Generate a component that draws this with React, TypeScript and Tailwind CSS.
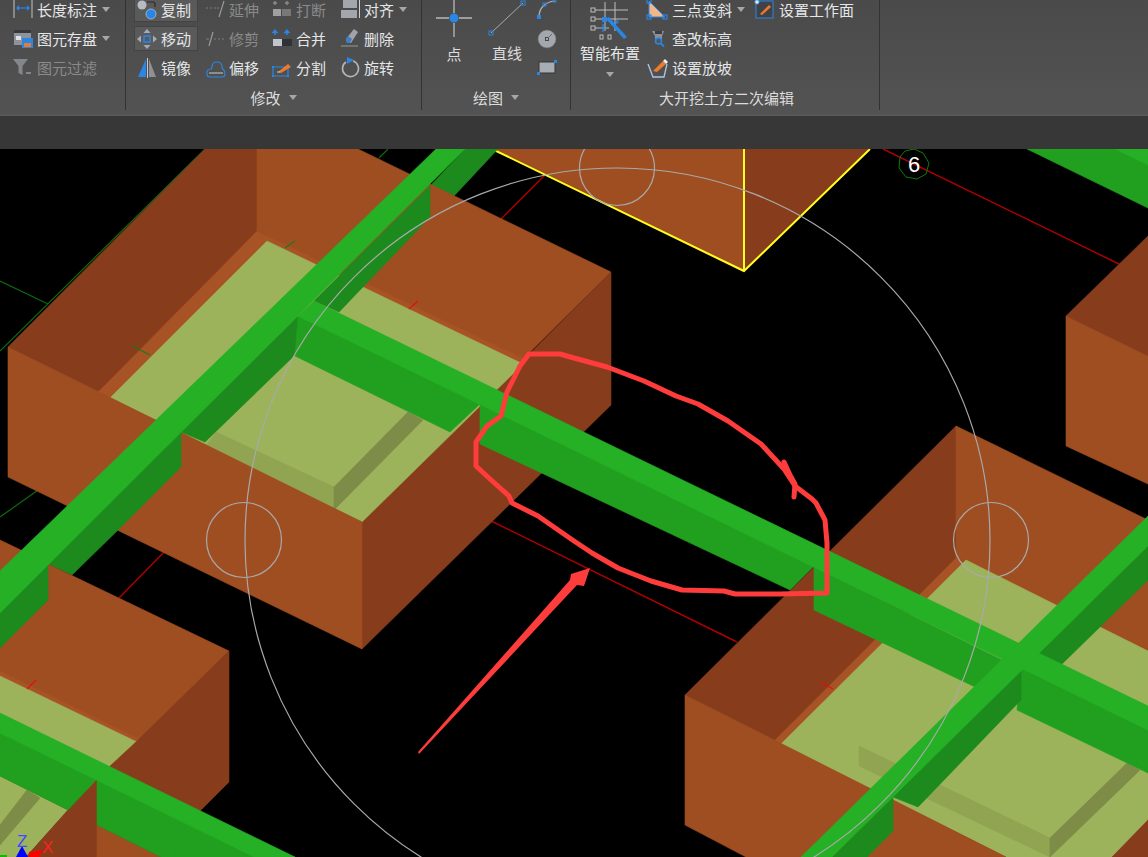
import React from "react";

const BLUE = "#2a86e4";
const DIM = "#7d7d7d";
const ORANGE = "#ee7b2b";

const Caret: React.FC<{ className?: string }> = ({ className }) => (
  <svg width="8" height="5" viewBox="0 0 8 5" className={className}>
    <path d="M0 0h8L4 5z" fill="#a6a6a6" />
  </svg>
);

const Ico: React.FC<{ children: React.ReactNode; w?: number; h?: number }> = ({ children, w = 20, h = 20 }) => (
  <svg width={w} height={h} viewBox={`0 0 ${w} ${h}`} className="shrink-0 overflow-visible">
    {children}
  </svg>
);

// panel 1
const LengthDim = () => (
  <Ico>
    <path d="M1 0v18M19 0v18" stroke="#c4c4c4" strokeWidth="1" />
    <path d="M4 8h12" stroke={BLUE} strokeWidth="1.2" />
    <path d="M3 8l3-3v6zM17 8l-3-3v6z" fill={BLUE} />
  </Ico>
);
const SaveElem = () => (
  <Ico>
    <rect x="1" y="1" width="17" height="15" fill="#8e9299" />
    <rect x="1" y="1" width="17" height="3" fill="#35383d" />
    <rect x="3" y="7" width="5" height="4" fill="#dfe1e4" />
    <rect x="9" y="9" width="11" height="10" fill={BLUE} />
    <rect x="11" y="14" width="7" height="4" fill={ORANGE} />
  </Ico>
);
const Funnel = () => (
  <Ico>
    <path d="M0 1h15L9.5 8v9l-4-2V8z" fill="#83878c" />
    <rect x="13" y="14" width="5" height="2" fill="#83878c" />
  </Ico>
);

// modify panel
const CopyIcon = () => (
  <Ico>
    <circle cx="5" cy="5" r="4.5" fill="#b8bcc2" />
    <circle cx="14" cy="14" r="5" fill={BLUE} />
    <circle cx="14" cy="14" r="5" fill="none" stroke="#c9d7e6" strokeWidth="0.6" />
    <path d="M10 2h6a2 2 0 0 1 2 2v3" fill="none" stroke="#2a2a2a" strokeWidth="1.2" />
  </Ico>
);
const MoveIcon = () => (
  <Ico>
    <path d="M10 0l3.5 4h-7zM10 20l3.5-4h-7zM0 10l4-3.5v7zM20 10l-4-3.5v7z" fill="#a8acb2" />
    <rect x="7" y="7" width="6" height="6" fill="none" stroke={BLUE} strokeWidth="1.5" />
  </Ico>
);
const MirrorIcon = () => (
  <Ico>
    <path d="M9 1v18H1z" fill={BLUE} />
    <path d="M12 1v18h7z" fill="#8d9096" />
    <path d="M10.5 0v20" stroke="#c8c8c8" strokeWidth="1" />
  </Ico>
);
const ExtendIcon = () => (
  <Ico>
    <path d="M1 8h2M5 8h2M9 8h2M12 8h2" stroke={DIM} strokeWidth="1.2" />
    <path d="M19 1L14 17" stroke="#9a9a9a" strokeWidth="1.2" />
  </Ico>
);
const TrimIcon = () => (
  <Ico>
    <path d="M1 10h3M9 10h2M13 10h2M17 10h2" stroke={DIM} strokeWidth="1.2" />
    <path d="M8 3L4 17" stroke="#9a9a9a" strokeWidth="1.2" />
  </Ico>
);
const OffsetIcon = () => (
  <Ico>
    <path
      d="M2 16c-1-3 1-5 4-5 1 0 1-1 1-2 0-3 2-5 5-5s5 2 5 5c0 1 0 2 1 2"
      fill="none"
      stroke={BLUE}
      strokeWidth="1.2"
    />
    <path d="M2 16c0 2 1 3 3 3h12c2 0 3-1 3-3s-1-4-2-5" fill="none" stroke={BLUE} strokeWidth="1.2" />
    <path d="M4 15h14" stroke="#c9c9c9" strokeWidth="1" />
  </Ico>
);
const BreakIcon = () => (
  <Ico>
    <path d="M3 1v4M1 3h4M15 1v4M13 3h4" stroke="#8b8b8b" strokeWidth="1.4" />
    <rect x="1" y="9" width="8" height="7" fill="#a0a0a0" />
    <rect x="10" y="9" width="9" height="7" fill="#787878" />
  </Ico>
);
const MergeIcon = () => (
  <Ico>
    <path d="M3 2v4M1 3.5L3 1l2 2.5zM15 2v4M13 3.5L15 1l2 2.5z" stroke={BLUE} strokeWidth="1.4" fill={BLUE} />
    <rect x="1" y="10" width="9" height="7" fill="#c2c6cc" />
    <rect x="10" y="10" width="10" height="7" fill="#2f3237" />
  </Ico>
);
const SplitIcon = () => (
  <Ico>
    <path d="M1 9h15v9H1z" fill="none" stroke={BLUE} strokeWidth="1.2" />
    <path d="M6 14L16 6l3 3-10 6z" fill={ORANGE} />
    <path d="M5 14h3" stroke="#c8c8c8" strokeWidth="1" />
    <rect x="0" y="8" width="2" height="2" fill={BLUE} />
    <rect x="0" y="17" width="2" height="2" fill={BLUE} />
    <rect x="15" y="17" width="2" height="2" fill={BLUE} />
  </Ico>
);
const AlignIcon = () => (
  <Ico>
    <rect x="3" y="0" width="14" height="8" fill="#a3a7ad" />
    <rect x="1" y="10" width="16" height="8" fill="#a3a7ad" />
    <path d="M19.5 0v18" stroke="#d0d0d0" strokeWidth="1" />
  </Ico>
);
const DeleteIcon = () => (
  <Ico>
    <path d="M14 0l4 3-7 11H7l-1-4z" fill="#9ea3aa" />
    <path d="M7 14l-1-4 2-3 4 3-2 4z" fill="#3d7fc4" />
    <path d="M1 17h17" stroke="#9a9a9a" strokeWidth="1" />
  </Ico>
);
const RotateIcon = () => (
  <Ico>
    <path d="M6 4a8 8 0 1 0 7-1" fill="none" stroke="#b4b4b4" strokeWidth="1.6" />
    <path d="M7 -1l7 3-7 4z" fill={BLUE} />
  </Ico>
);

// excavation panel
const SlopeIcon = () => (
  <Ico>
    <path d="M1 1L17 17H1z" fill="#f2b68b" stroke={BLUE} strokeWidth="1" />
    <rect x="-1" y="-1" width="4" height="4" fill="none" stroke={BLUE} strokeWidth="1.2" />
    <rect x="-1" y="15" width="4" height="4" fill="none" stroke={BLUE} strokeWidth="1.2" />
    <rect x="15" y="15" width="4" height="4" fill="none" stroke={BLUE} strokeWidth="1.2" />
  </Ico>
);
const ElevIcon = () => (
  <Ico>
    <path d="M4 2h12l-2 5v5H7V7z" fill="#8d9197" />
    <rect x="7" y="2" width="7" height="3" fill="#3a3d42" />
    <circle cx="10.5" cy="12" r="3" fill="#555" stroke={BLUE} strokeWidth="1.6" />
    <path d="M13 14.5l3 3" stroke={BLUE} strokeWidth="1.8" />
  </Ico>
);
const GradeIcon = () => (
  <Ico>
    <path d="M0 6l5 13h11l3-13" fill="none" stroke="#a9c8e8" strokeWidth="1.3" />
    <path d="M5 13L15 3l3 3-9 8z" fill={ORANGE} />
    <path d="M15 3l2-2 3 3-2 2z" fill="#f0f0f0" />
  </Ico>
);
const WorkPlaneIcon = () => (
  <Ico>
    <rect x="1" y="1" width="17" height="17" fill="#3f4247" stroke={BLUE} strokeWidth="1" />
    <path d="M5 14l9-9 2 2-9 8z" fill={ORANGE} />
    <circle cx="2" cy="2" r="2.2" fill="#dbe7f3" stroke={BLUE} strokeWidth="0.8" />
  </Ico>
);

// draw panel
const PointIcon = () => (
  <Ico w={36} h={37}>
    <path d="M0 18h13M23 18h13M18 0v13M18 23v14" stroke="#b9b9b9" strokeWidth="1.3" />
    <circle cx="18" cy="18" r="4.5" fill={BLUE} />
  </Ico>
);
const LineIcon = () => (
  <Ico w={38} h={37}>
    <path d="M3 33L35 3" stroke="#a9a9a9" strokeWidth="1" />
    <rect x="1" y="31" width="4" height="4" fill="none" stroke={BLUE} strokeWidth="1" />
    <rect x="33" y="1" width="4" height="4" fill="none" stroke={BLUE} strokeWidth="1" />
  </Ico>
);
const ArcIcon = () => (
  <Ico>
    <path d="M2 17C2 8 8 2 18 1" fill="none" stroke="#b5b5b5" strokeWidth="1.2" />
    <rect x="0" y="15" width="4" height="4" fill={BLUE} />
    <rect x="6" y="3" width="3" height="3" fill="none" stroke={BLUE} strokeWidth="1" />
    <rect x="16" y="-1" width="3" height="3" fill="none" stroke={BLUE} strokeWidth="1" />
  </Ico>
);
const CircleIcon = () => (
  <Ico>
    <circle cx="10" cy="10" r="9" fill="#a4a8ae" stroke="#6d6f72" strokeWidth="0.6" />
    <rect x="8.5" y="8.5" width="3" height="3" fill="none" stroke="#46494d" strokeWidth="1" />
    <path d="M11 9l4-4" stroke="#6a6c70" strokeWidth="1" />
  </Ico>
);
const RectIcon = () => (
  <Ico>
    <rect x="2" y="4" width="16" height="11" fill="#a8acb3" stroke="#34373b" strokeWidth="1" />
    <rect x="0" y="14" width="3" height="3" fill={BLUE} />
    <rect x="17" y="2" width="3" height="3" fill={BLUE} />
  </Ico>
);
const SmartIcon = () => (
  <Ico w={38} h={38}>
    <path d="M14 0v29M24 0v29M4 8h33M4 17h33M4 26h14" stroke="#bdbdbd" strokeWidth="1" fill="none" />
    <rect x="0" y="6" width="4" height="4" fill="none" stroke="#bdbdbd" strokeWidth="1" />
    <rect x="0" y="15" width="4" height="4" fill="none" stroke="#bdbdbd" strokeWidth="1" />
    <rect x="0" y="24" width="4" height="4" fill="none" stroke="#bdbdbd" strokeWidth="1" />
    <rect x="9" y="33" width="3" height="4" fill="none" stroke="#bdbdbd" strokeWidth="1" />
    <rect x="17" y="33" width="3" height="4" fill="none" stroke="#bdbdbd" strokeWidth="1" />
    <path d="M15 17l3-2 18 20-3 2z" fill={BLUE} />
    <rect x="11" y="15" width="5" height="5" fill={BLUE} />
    <path d="M8 26h8M12 22v8M24 20h4M26 18v4" stroke={BLUE} strokeWidth="1.2" />
  </Ico>
);

type Item = { label: string; icon?: React.ReactNode; dim?: boolean; caret?: boolean; on?: boolean };

const Cell: React.FC<{ item: Item }> = ({ item }) => (
  <div className="flex h-[29px] items-center">
    <div
      className={`flex h-[25px] items-center gap-[4px] border pl-[2px] pr-[6px] ${
        item.on ? "border-[#444444] bg-[#5a5a5a]" : "border-transparent"
      }`}
    >
      {item.icon}
      <span className={`whitespace-nowrap text-[15px] leading-none ${item.dim ? "text-[#8a8a8a]" : "text-[#e4e6e8]"}`}>
        {item.label}
      </span>
      {item.caret ? <Caret className="ml-[1px]" /> : null}
    </div>
  </div>
);

const PanelTitle: React.FC<{ label: string; caret?: boolean }> = ({ label, caret }) => (
  <div className="flex h-[26px] items-center justify-center gap-[8px] text-[15px] leading-none text-[#dcdcdc]">
    <span>{label}</span>
    {caret ? <Caret /> : null}
  </div>
);

const modifyItems: Item[] = [
  { label: "复制", icon: <CopyIcon />, on: true },
  { label: "延伸", icon: <ExtendIcon />, dim: true },
  { label: "打断", icon: <BreakIcon />, dim: true },
  { label: "对齐", icon: <AlignIcon />, caret: true },
  { label: "移动", icon: <MoveIcon />, on: true },
  { label: "修剪", icon: <TrimIcon />, dim: true },
  { label: "合并", icon: <MergeIcon /> },
  { label: "删除", icon: <DeleteIcon /> },
  { label: "镜像", icon: <MirrorIcon /> },
  { label: "偏移", icon: <OffsetIcon /> },
  { label: "分割", icon: <SplitIcon /> },
  { label: "旋转", icon: <RotateIcon /> },
];

const Ribbon = () => (
  <div className="h-[115px] overflow-hidden bg-gradient-to-b from-[#4a4a4a] to-[#535353]">
    <div className="flex h-[110px]">
      <div className="w-[126px] shrink-0 border-r border-[#333333] pl-[10px]">
        <div className="-mt-[5px]">
          <Cell item={{ label: "长度标注", icon: <LengthDim />, caret: true }} />
          <Cell item={{ label: "图元存盘", icon: <SaveElem />, caret: true }} />
          <Cell item={{ label: "图元过滤", icon: <Funnel />, dim: true }} />
        </div>
      </div>

      <div className="flex w-[296px] shrink-0 flex-col border-r border-[#333333]">
        <div className="-mt-[5px] ml-[8px] grid h-[90px] grid-cols-[68px_67px_68px_68px] content-start">
          {modifyItems.map((item) => (
            <Cell key={item.label} item={item} />
          ))}
        </div>
        <PanelTitle label="修改" caret />
      </div>

      <div className="flex w-[149px] shrink-0 flex-col border-r border-[#333333]">
        <div className="flex h-[85px] pl-[14px]">
          <div className="flex w-[50px] flex-col items-start">
            <PointIcon />
            <span className="mt-[9px] w-[36px] text-center text-[15px] leading-none text-[#dcdcdc]">点</span>
          </div>
          <div className="flex w-[42px] flex-col items-center">
            <LineIcon />
            <span className="mt-[8px] whitespace-nowrap text-[15px] leading-none text-[#dcdcdc]">直线</span>
          </div>
          <div className="ml-[9px] flex flex-col gap-[9px]">
            <ArcIcon />
            <CircleIcon />
            <RectIcon />
          </div>
        </div>
        <PanelTitle label="绘图" caret />
      </div>

      <div className="flex w-[309px] shrink-0 flex-col border-r border-[#333333]">
        <div className="-mt-[5px] flex h-[90px]">
          <div className="ml-[8px] flex w-[62px] flex-col items-center pt-[7px]">
            <SmartIcon />
            <span className="mt-[5px] whitespace-nowrap text-[15px] leading-none text-[#e4e6e8]">智能布置</span>
            <Caret className="mt-[12px]" />
          </div>
          <div className="ml-[4px] w-[107px]">
            <Cell item={{ label: "三点变斜", icon: <SlopeIcon />, caret: true }} />
            <Cell item={{ label: "查改标高", icon: <ElevIcon /> }} />
            <Cell item={{ label: "设置放坡", icon: <GradeIcon /> }} />
          </div>
          <div>
            <Cell item={{ label: "设置工作面", icon: <WorkPlaneIcon /> }} />
          </div>
        </div>
        <div className="flex h-[26px] items-center justify-center pl-[3px] text-[15px] leading-none text-[#dcdcdc]">
          大开挖土方二次编辑
        </div>
      </div>
    </div>
  </div>
);

const DK = "#873d1c";
const MID = "#9f4e22";
const LEDGE = "#a85326";
const PALE = "#9db35b";
const PAD_M = "#91a452";
const PAD_D = "#7d8c47";
const G_L = "#25b025";
const G_M = "#21a020";
const G_D = "#1c8a1c";
const ANNOT = "#fe3c3c";

// the thin stroke closes the hairline seams between neighbouring faces
const Poly: React.FC<{ c: string; p: string }> = ({ c, p }) => (
  <polygon fill={c} stroke={c} strokeWidth="0.6" strokeLinejoin="round" points={p} />
);

const Scene = () => (
  <svg className="block h-[708px] w-[1148px]" viewBox="0 149 1148 708" style={{ background: "#000" }}>
    {/* grid lines under the solids */}
    <g fill="none">
      <path d="M0 351L205 149M0 281L48 304M48 483L0 517M388 149L379 158" stroke="#0d6a0d" strokeWidth="1.2" />
      <path d="M883 149L1119 264M501 219L551 169M168 548L119 598M487 519L737 642" stroke="#b00000" strokeWidth="1.4" />
    </g>

    {/* top right beam */}
    <Poly c={G_M} p="1027,149 1148,149 1148,208" />
    <Poly c={G_L} p="1115,149 1148,149 1148,165" />

    {/* right pit */}
    <Poly c={DK} p="1148,236 1066,316 1148,356" />
    <Poly c={MID} p="1066,316 1148,356 1148,484 1066,446" />

    {/* yellow pit */}
    <Poly c={MID} p="492,149 744,149 744,272" />
    <Poly c={DK} p="744,149 870,149 744,272" />
    <path d="M492 149L744 271L870 149M744 149V271" fill="none" stroke="#ffff1e" strokeWidth="2" />

    {/* beam A, top */}
    <Poly c={G_D} p="465,149 498,149 454,196 430,186" />

    {/* pit 1 */}
    <Poly c={DK} p="8,347 205,149 257,149 257,231 97,393" />
    <Poly c={MID} p="257,149 358,149 611,272 520,362 257,231" />
    <Poly c={DK} p="362,522 362,649 611,405 611,272" />
    <Poly c={LEDGE} p="257,231 522,358 522,366 267,241 110,399 97,393" />
    <Poly c={PALE} p="267,241 523,364 362,522 110,398" />
    <Poly c={PAD_M} p="216,432 334,487 334,510 206,446" />
    <Poly c={PAD_D} p="408,412 423,420 334,510 334,487" />
    <Poly c={MID} p="8,347 362,522 362,649 8,477" />

    {/* beams across pit 1 */}
    <Poly c={G_D} p="430,186 430,217 339,312 314,301" />
    <Poly c={G_D} p="298,316 298,352 205,442 181,432" />
    <Poly c={G_M} p="298,316 295,356 450,432 480,404" />
    <Poly c={G_D} p="181,432 181,467 117,531 72,575 48,564" />

    {/* pit 3, lower left */}
    <Poly c={MID} p="0,540 27,553 0,575" />
    <Poly c={MID} p="48,564 48,600 0,646 0,673 139,741 229,651" />
    <Poly c={LEDGE} p="0,671 139,739 135,743 0,677" />
    <Poly c={PALE} p="0,676 137,742 95,795 0,740" />
    <Poly c={DK} p="229,651 229,782 200,811 108,768 137,741" />
    <Poly c={G_D} p="48,564 48,600 0,648 0,612" />
    <Poly c={G_L} p="436,149 465,149 0,613 0,571" />

    {/* beam D and what lies under it */}
    <Poly c={PALE} p="0,776 68,810 26,857 0,857" />
    <Poly c={PAD_D} p="27,790 40,798 0,845 0,825" />
    <Poly c={DK} p="97,779 97,857 26,857 68,810" />
    <Poly c={MID} p="97,825 161,857 97,857" />
    <Poly c={G_M} p="0,733 0,776 68,810 97,779" />
    <Poly c={G_M} p="97,779 97,825 161,857 256,857" />
    <Poly c={G_L} p="0,713 295,857 254,857 0,733" />

    {/* pit 4 */}
    <Poly c={DK} p="685,695 956,426 956,558 773,742" />
    <Poly c={MID} p="956,426 1148,520 1148,650 956,558" />
    <Poly c={LEDGE} p="956,558 1148,650 1148,654 966,561 781,745 773,742" />
    <Poly c={PALE} p="966,560 1148,651 1148,857 1006,857 781,744" />
    <Poly c={DK} p="1148,820 1148,857 1112,857" />
    <Poly c={PAD_M} p="859,746 1050,838 1050,857 859,766" />
    <Poly c={PAD_D} p="1127,763 1140,770 1050,857 1050,838" />
    <Poly c={MID} p="685,695 1006,857 746,857 685,825" />

    {/* beam B sides */}
    <Poly c={G_M} p="480,404 480,444 790,590 814,566" />
    <Poly c={G_M} p="814,567 814,610 973,686 985,690 1010,664" />
    <Poly c={G_M} p="1021,668 1017,710 1148,773 1148,730" />

    {/* beam C */}
    <Poly c={G_D} p="1037,655 1061,665 1148,580 1148,546" />
    <Poly c={G_D} p="1021,668 1021,700 918,807 893,797" />
    <Poly c={G_D} p="893,797 893,831 867,857 832,857" />
    <Poly c={G_L} p="314,301 1148,706 1148,730 298,316" />
    <Poly c={G_L} p="1148,516 1148,546 832,857 801,857" />

    {/* ticks */}
    <path d="M132 346L150 355M285 248L295 241" stroke="#1a7a1a" strokeWidth="1.2" />
    <path d="M409 309L418 301M27 689L36 680M820 682L833 689" stroke="#e01010" strokeWidth="1.2" />

    {/* grips and rotation circle */}
    <g fill="none" stroke="#a9a9a9" strokeWidth="1.2">
      <circle cx="617.5" cy="540.5" r="372.5" />
      <circle cx="617" cy="168" r="37.5" />
      <circle cx="244" cy="540" r="37.5" />
      <circle cx="991" cy="540" r="37.5" />
    </g>

    {/* axis marker */}
    <polygon
      points="914,149 923,153 929,163 926,174 917,179 906,177 899,168 900,157 905,151"
      fill="none"
      stroke="#0f7a0f"
      strokeWidth="1"
    />
    <text x="914" y="172" textAnchor="middle" fontSize="22" fontFamily="'Liberation Sans', sans-serif" fill="#ffffff">
      6
    </text>

    {/* hand drawn mark */}
    <path
      d="M529 354L560 354L574 358L607 367L644 381L676 396L698 404L728 421L761 444L784 469L795 486L812 499L816 503L825 520L827 543L827 593L779 594L735 594L724 591L682 590L651 581L618 568L592 553L574 541L538 516L512 503L509 496L490 479L476 466L476 442L487 426L501 416L507 392L520 366Z"
      fill="none"
      stroke={ANNOT}
      strokeWidth="5"
      strokeLinejoin="round"
    />
    <path d="M784 462L790 475L795 484L794 497" fill="none" stroke={ANNOT} strokeWidth="5" strokeLinecap="round" />
    <polygon points="418,752 570,580 571,574 590,568 584,586 577,585 419,754" fill={ANNOT} />

    {/* ucs icon */}
    <polygon points="22,846 28,857 16,857" fill="#0000ff" />
    <polygon points="29,852 43,850 39,857 29,857" fill="#ff0000" />
    <rect x="0" y="855" width="7" height="2" fill="#00c000" />
    <text x="17" y="847" fontSize="17" fontFamily="'Liberation Sans', sans-serif" fill="#3d4dff">
      Z
    </text>
    <text x="42" y="853" fontSize="17" fontFamily="'Liberation Sans', sans-serif" fill="#ff2020">
      X
    </text>
  </svg>
);

export default function App() {
  return (
    <div className="h-[857px] w-[1148px] overflow-hidden bg-black font-['Noto_Sans_CJK_SC','Liberation_Sans',sans-serif]">
      <Ribbon />
      <div className="h-[34px] border-t border-[#5c5c5c] bg-[#373737]" />
      <Scene />
    </div>
  );
}
